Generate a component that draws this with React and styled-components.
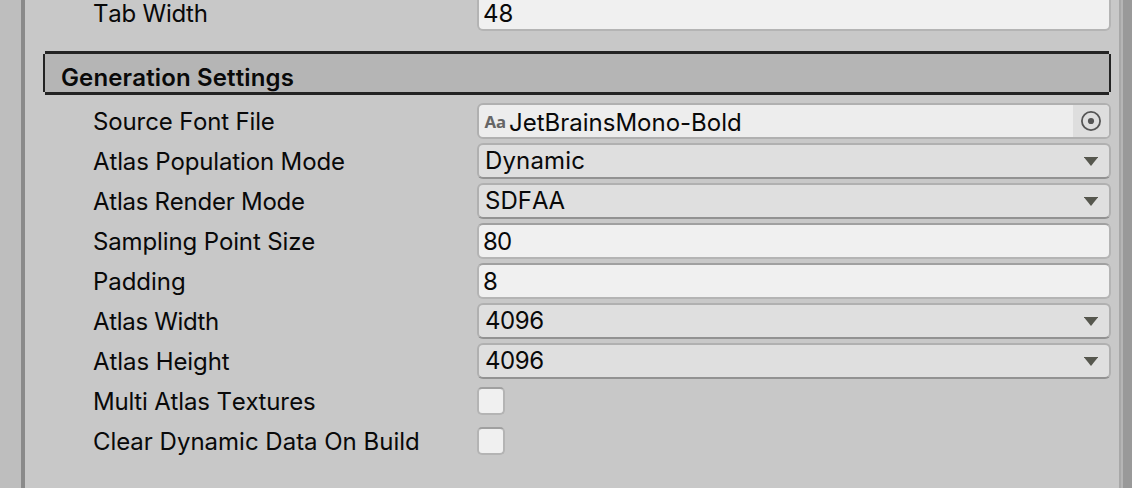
import React from 'react';
import styled, { createGlobalStyle } from 'styled-components';

const GlobalStyle = createGlobalStyle`
  * { box-sizing: border-box; }
  body {
    margin: 0;
    overflow: hidden;
    background: #c8c8c8;
    color: #090909;
    font: 400 24px/36px Inter, sans-serif;
    font-kerning: none;
  }
`;

const Window = styled.div`
  display: flex;
  height: 488px;
  overflow: hidden;
`;

const Gutter = styled.div`
  flex: none;
  width: 25px;
  background: #bebebe;
  border-right: 4px solid #8a8a8a;
`;

const Inspector = styled.main`
  flex: 1;
  min-width: 0;
  display: flex;
  flex-direction: column;
  padding: 0 8px 0 18px;
  margin-top: -5px;
`;

const Scrollbar = styled.div`
  flex: none;
  width: 13px;
  background: #999;
  border-left: 2px solid #a8a8a8;
  box-shadow: inset 2px 0 #b5b5b5;
`;

const SectionHeader = styled.header`
  display: flex;
  align-items: center;
  height: 44px;
  margin: 20px 0 8px;
`;

const HeaderEdge = styled.span`
  width: 2px;
  height: 38px;
  background: #232323;
`;

const HeaderTitle = styled.h2`
  flex: 1;
  height: 44px;
  margin: 0;
  padding: 6px 0 0 16px;
  background: #b5b5b5;
  border: solid #232323;
  border-width: 3px 0;
  font-size: 24px;
  font-weight: 600;
  line-height: 36px;
  letter-spacing: 0.14px;
`;

const Rows = styled.div`
  display: flex;
  flex-direction: column;
  gap: 4px;
`;

const Row = styled.div`
  flex: none;
  display: flex;
  height: 36px;
  padding-left: 50px;
`;

const Label = styled.label`
  flex: none;
  width: 384px;
  height: 36px;
  line-height: 38px;
  white-space: nowrap;
  letter-spacing: ${(p) => p.$tracking || 0}px;
`;

const Field = styled.div`
  flex: 1;
  display: flex;
  height: 36px;
  border: 2px solid #b4b4b4;
  border-radius: 6px;
  line-height: 34px;
  letter-spacing: ${(p) => p.$tracking || 0}px;
`;

const NumberField = styled(Field)`
  padding-left: 4px;
  background: #f0f0f0;
  border-top-color: #a0a0a0;
`;

const Dropdown = styled(Field)`
  align-items: center;
  justify-content: space-between;
  padding: 0 11px 0 6px;
  background: #dfdfdf;
  border-color: #b0b0b0;
  border-bottom-color: #929292;
  line-height: 32px;
`;

const DropdownValue = styled.span`
  height: 32px;
`;

const ObjectField = styled(Field)`
  background: #ededed;
  border-color: #b0b0b0;
  overflow: hidden;
`;

const ObjectName = styled.span`
  flex: 1;
  padding-left: 3px;
  line-height: 36px;
`;

const FontIcon = styled.span`
  width: 27px;
  padding-left: 5.5px;
  color: #666;
  font: 700 16.8px/33px "Noto Sans", sans-serif;
`;

const Picker = styled.button`
  width: 36px;
  padding: 0;
  border: 0;
  background: #dedede;
  display: grid;
  place-items: center;
`;

const Checkbox = styled.span`
  width: 28px;
  height: 28px;
  margin-top: 4px;
  border: 2px solid #b4b4b4;
  border-top-color: #a0a0a0;
  border-radius: 5px;
  background: #f0f0f0;
`;

const Arrow = () => (
  <svg width="14" height="10" viewBox="0 0 14 10">
    <path d="M-0.3 1H14.3L7 10Z" fill="#56574e" />
  </svg>
);

const Target = () => (
  <svg width="20" height="20" viewBox="0 0 20 20">
    <circle cx="10" cy="10" r="9.1" fill="none" stroke="#555" strokeWidth="1.8" />
    <circle cx="10" cy="10" r="3.1" fill="#555" />
  </svg>
);

const NumberRow = ({ label, value, labelTracking, valueTracking }) => (
  <Row>
    <Label $tracking={labelTracking}>{label}</Label>
    <NumberField $tracking={valueTracking}>{value}</NumberField>
  </Row>
);

const DropdownRow = ({ label, value, labelTracking, valueTracking }) => (
  <Row>
    <Label $tracking={labelTracking}>{label}</Label>
    <Dropdown $tracking={valueTracking}>
      <DropdownValue>{value}</DropdownValue>
      <Arrow />
    </Dropdown>
  </Row>
);

const CheckRow = ({ label, labelTracking }) => (
  <Row>
    <Label $tracking={labelTracking}>{label}</Label>
    <Checkbox />
  </Row>
);

export default function App() {
  return (
    <>
      <GlobalStyle />
      <Window>
        <Gutter />
        <Inspector>
          <NumberRow label="Tab Width" value="48" labelTracking={-0.22} />
          <SectionHeader>
            <HeaderEdge />
            <HeaderTitle>Generation Settings</HeaderTitle>
            <HeaderEdge />
          </SectionHeader>
          <Rows>
            <Row>
              <Label $tracking={-0.19}>Source Font File</Label>
              <ObjectField>
                <FontIcon>Aa</FontIcon>
                <ObjectName>JetBrainsMono-Bold</ObjectName>
                <Picker>
                  <Target />
                </Picker>
              </ObjectField>
            </Row>
            <DropdownRow label="Atlas Population Mode" value="Dynamic" labelTracking={-0.14} valueTracking={0.15} />
            <DropdownRow label="Atlas Render Mode" value="SDFAA" labelTracking={-0.25} />
            <NumberRow label="Sampling Point Size" value="80" labelTracking={-0.13} valueTracking={-0.8} />
            <NumberRow label="Padding" value="8" labelTracking={-0.05} />
            <DropdownRow label="Atlas Width" value="4096" labelTracking={-0.32} valueTracking={-0.4} />
            <DropdownRow label="Atlas Height" value="4096" labelTracking={-0.08} valueTracking={-0.4} />
            <CheckRow label="Multi Atlas Textures" labelTracking={-0.15} />
            <CheckRow label="Clear Dynamic Data On Build" />
          </Rows>
        </Inspector>
        <Scrollbar />
      </Window>
    </>
  );
}
